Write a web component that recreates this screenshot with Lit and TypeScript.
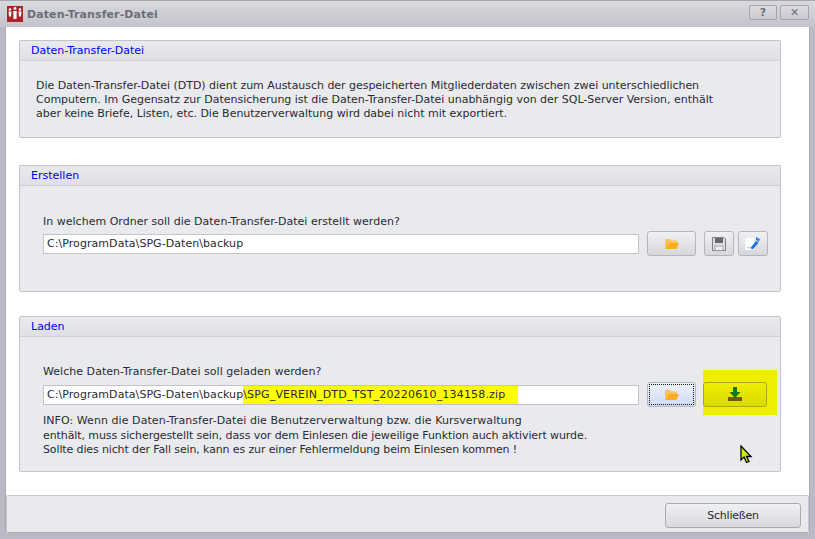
import { LitElement, html, css, svg } from "lit";
import { customElement } from "lit/decorators.js";

const folder = svg`<svg width="14" height="10" viewBox="0 0 14 10"><path d="M0 0h5l1 1.500h6V4H3L0 9z" fill="#f8c45c"/><path d="M3 4h11l-2.500 6H0z" fill="#fcae1e"/></svg>`;
const save = svg`<svg width="16" height="16" viewBox="0 0 16 16"><path d="M1.500 1.500h11.500l1.500 1.500v11.500h-13z" fill="#dcdee2" stroke="#808188"/><rect x="4" y="2" width="8" height="5" fill="#66686e"/><rect x="4" y="10" width="8" height="4.500" fill="#eceef1" stroke="#8a8b90" stroke-width=".7"/></svg>`;
const edit = svg`<svg width="16" height="14" viewBox="0 0 16 14"><path d="M0 1h9v12H0z" fill="#fbfcfe"/><path d="M2 11l1.500-1 1 1 1-.8" stroke="#b8c0d0" fill="none"/><path d="M5.500 11L11 4l2.500 2L7.500 12.500z" fill="#1877d2"/><path d="M11 0l2 1 2 1-1.500 3-2.500-2z" fill="#2c88dc"/></svg>`;
const download = svg`<svg width="14" height="14" viewBox="0 0 14 14"><path d="M0 10h14v4H0z" fill="#6f5c00"/><path d="M5 0h4v5h3.500L7 11 1.500 5H5z" fill="#0f7d0f"/></svg>`;

@customElement("app-root")
export class AppRoot extends LitElement {
  static styles = css`
    :host {
      display: flex;
      flex-direction: column;
      width: 815px;
      height: 539px;
      position: relative;
      overflow: hidden;
      box-sizing: border-box;
      background: #b9bac6;
      font-family: "DejaVu Sans", sans-serif;
      font-size: 11px;
      color: #2a2a30;
    }
    .title {
      height: 27px;
      flex: none;
      display: flex;
      align-items: center;
      padding: 0 6px 0 7px;
      background: linear-gradient(#d9dade, #c3c4cc);
      border-top: 1px solid #a6a7b2;
      box-sizing: border-box;
      gap: 4px;
    }
    .logo { width: 16px; height: 16px; flex: none; margin-bottom: 1px; }
    .wintitle { font-size: 11px; font-weight: bold; color: #6c6d78; flex: 1; letter-spacing: 0.1px; }
    .wbtn {
      width: 28px;
      height: 15px;
      border: 1px solid #a3a4ae;
      border-radius: 2px;
      background: linear-gradient(#dcdde1, #c9cad0);
      box-sizing: border-box;
      margin-bottom: 3px;
      display: flex;
      align-items: center;
      justify-content: center;
      font-size: 11px;
      font-weight: bold;
      color: #6c6d78;
      line-height: 1;
    }
    .wbtn + .wbtn { margin-left: -1px; width: 29px; }
    .client {
      flex: 1;
      margin: 0 5px 6px 5px;
      background: #fff;
      border-left: 1px solid #a9aab4;
      border-right: 1px solid #a9aab4;
      display: flex;
      flex-direction: column;
      min-height: 0;
    }
    .content {
      flex: 1;
      padding: 13px 28px 0 13px;
      display: flex;
      flex-direction: column;
    }
    .panel {
      background: #e9eaee;
      border: 1px solid #c2c3cb;
      border-radius: 2px;
      box-sizing: border-box;
    }
    .p1 { height: 98px; margin-bottom: 27px; }
    .p2 { height: 127px; margin-bottom: 24px; }
    .p3 { height: 156px; }
    .phead {
      height: 20px;
      box-sizing: border-box;
      padding-left: 11px;
      display: flex;
      align-items: center;
      color: #0000f0;
      background: linear-gradient(#e9eaee, #dfe0e5);
      border-bottom: 1px solid #cfd0d7;
      font-size: 11px;
    }
    .desc { padding: 18px 16px 0; line-height: 14px; white-space: nowrap; }
    .desc div:nth-child(1) { letter-spacing: -0.034px; }
    .desc div:nth-child(2) { letter-spacing: -0.017px; }
    .desc div:nth-child(3) { letter-spacing: -0.023px; }
    .body { padding: 0 0 0 23px; }
    .p2 .body { padding-top: 29px; }
    .p3 .body { padding-top: 28px; }
    .label { line-height: 14px; margin-bottom: 6px; }
    .p2 .label { margin-bottom: 5px; letter-spacing: 0.015px; }
    .p3 .label { letter-spacing: 0.04px; }
    .row { display: flex; align-items: center; height: 25px; margin-top: -3px; }
    .input {
      width: 596px;
      height: 20px;
      box-sizing: border-box;
      background: #fff;
      border: 1px solid #c2c3cb;
      padding-left: 3px;
      display: flex;
      align-items: center;
      flex: none;
      white-space: pre;
      letter-spacing: 0.06px;
    }
    .hl { background: #ffff00; height: 18px; line-height: 18px; width: 275px; letter-spacing: 0.18px; }
    .btn {
      box-sizing: border-box;
      height: 25px;
      border: 1px solid #b4b5bd;
      border-radius: 3px;
      background: linear-gradient(#f0f1f3, #d6d7dc);
      display: flex;
      align-items: center;
      justify-content: center;
      flex: none;
      padding: 0;
    }
    .b-folder { width: 49px; margin-left: 8px; }
    .b-save { width: 30px; margin-left: 8px; }
    .b-edit { width: 30px; margin-left: 4px; }
    .focus {
      background: linear-gradient(#eef2fb, #cfdcf6);
      outline: 1px dotted #111;
      outline-offset: -3px;
    }
    .hlwrap {
      background: #eeee00;
      width: 74px;
      height: 45px;
      margin-left: 7px;
      margin-top: -5px;
      flex: none;
      display: flex;
      align-items: center;
      box-sizing: border-box;
      padding-top: 4px;
    }
    .b-dl {
      width: 64px;
      background: linear-gradient(#efef00, #d9d900);
      border-color: #aaaa10;
    }
    .info { line-height: 14.5px; margin-top: 7px; white-space: nowrap; }
    .info div:nth-child(1) { letter-spacing: 0.06px; }
    .info div:nth-child(2) { letter-spacing: -0.09px; }
    .info div:nth-child(3) { letter-spacing: -0.126px; }
    .footer {
      height: 38px;
      flex: none;
      box-sizing: border-box;
      background: #e9eaee;
      border: 1px solid #c8c9d0;
      border-bottom-color: #a9aab4;
      border-radius: 2px;
      display: flex;
      align-items: flex-start;
      justify-content: flex-end;
      padding-right: 7px;
      padding-top: 7px;
    }
    .close {
      width: 136px;
      height: 25px;
      box-sizing: border-box;
      border: 1px solid #a9aab4;
      border-radius: 3px;
      background: linear-gradient(#f0f1f3, #d8d9de);
      display: flex;
      align-items: center;
      justify-content: center;
      font-size: 11px;
      letter-spacing: -0.2px;
    }
    .cursor { position: absolute; left: 740px; top: 445px; }
  `;

  render() {
    return html`
      <div class="title">
        <svg class="logo" viewBox="0 0 16 16">
          <rect width="16" height="16" fill="#a8242c" />
          <g fill="#fff">
            <circle cx="3" cy="3.500" r="1.300" /><path d="M1.500 5.500h3L4 10.500H2z" />
            <circle cx="8" cy="2.500" r="1.400" /><path d="M6.300 5h3.400L9.500 13h-3z" />
            <circle cx="13" cy="3.500" r="1.300" /><path d="M11.500 5.500h3L14 10.500h-2z" />
          </g>
        </svg>
        <span class="wintitle">Daten-Transfer-Datei</span>
        <span class="wbtn">?</span>
        <span class="wbtn">✕</span>
      </div>
      <div class="client">
        <div class="content">
          <section class="panel p1">
            <div class="phead">Daten-Transfer-Datei</div>
            <div class="desc">
              <div>Die Daten-Transfer-Datei (DTD) dient zum Austausch der gespeicherten Mitgliederdaten zwischen zwei unterschiedlichen</div>
              <div>Computern. Im Gegensatz zur Datensicherung ist die Daten-Transfer-Datei unabhängig von der SQL-Server Version, enthält</div>
              <div>aber keine Briefe, Listen, etc. Die Benutzerverwaltung wird dabei nicht mit exportiert.</div>
            </div>
          </section>
          <section class="panel p2">
            <div class="phead">Erstellen</div>
            <div class="body">
              <div class="label">In welchem Ordner soll die Daten-Transfer-Datei erstellt werden?</div>
              <div class="row">
                <div class="input">C:\\ProgramData\\SPG-Daten\\backup</div>
                <div class="btn b-folder">${folder}</div>
                <div class="btn b-save">${save}</div>
                <div class="btn b-edit">${edit}</div>
              </div>
            </div>
          </section>
          <section class="panel p3">
            <div class="phead">Laden</div>
            <div class="body">
              <div class="label">Welche Daten-Transfer-Datei soll geladen werden?</div>
              <div class="row">
                <div class="input">C:\\ProgramData\\SPG-Daten\\backup<span class="hl">\\SPG_VEREIN_DTD_TST_20220610_134158.zip</span></div>
                <div class="btn b-folder focus">${folder}</div>
                <div class="hlwrap"><div class="btn b-dl">${download}</div></div>
              </div>
              <div class="info">
                <div>INFO: Wenn die Daten-Transfer-Datei die Benutzerverwaltung bzw. die Kursverwaltung</div>
                <div>enthält, muss sichergestellt sein, dass vor dem Einlesen die jeweilige Funktion auch aktiviert wurde.</div>
                <div>Sollte dies nicht der Fall sein, kann es zur einer Fehlermeldung beim Einlesen kommen !</div>
              </div>
            </div>
          </section>
        </div>
        <div class="footer"><div class="close">Schließen</div></div>
      </div>
      <svg class="cursor" width="13" height="19" viewBox="0 0 13 19">
        <path d="M1 1v14l3-3 2.500 5.500 2.500-1L6.500 11.500H11z" fill="#c8f000" stroke="#000" stroke-width="1.300" />
      </svg>
    `;
  }
}
